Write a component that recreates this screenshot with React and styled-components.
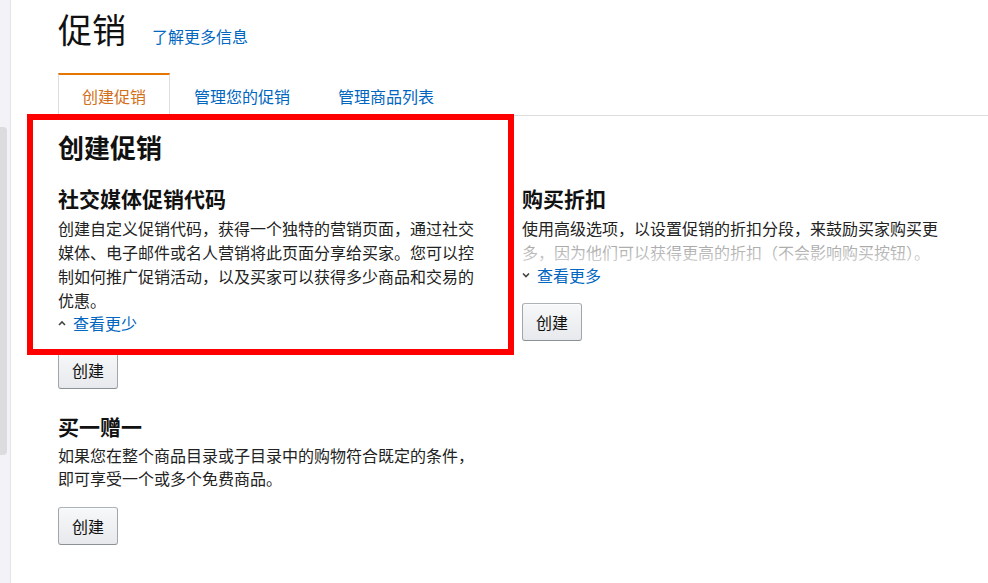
import React from 'react';
import styled, { createGlobalStyle } from 'styled-components';

const GlobalStyle = createGlobalStyle`
    html, body {
        margin: 0;
        padding: 0;
        background: #fff;
    }
    body {
        font-family: "Noto Sans CJK SC", "Noto Sans", sans-serif;
        color: #111;
    }
`;

const Pagina = styled.div`
    position: relative;
    display: flex;
    width: 988px;
    height: 583px;
    overflow: hidden;
    background: #fff;
`;

const BarraLateral = styled.div`
    width: 10px;
    flex-shrink: 0;
    background: #f3f3f7;
    border-right: 1px solid #e4e4e8;
`;

const Polegar = styled.div`
    width: 7px;
    height: 328px;
    margin-top: 127px;
    background: #dcdcdf;
    border-radius: 0 4px 4px 0;
`;

const Conteudo = styled.main`
    flex: 1;
    padding: 9px 0 0 47px;
`;

const Cabecalho = styled.div`
    display: flex;
    align-items: baseline;
    gap: 26px;
`;

const Titulo = styled.h1`
    margin: 0;
    font-size: 34px;
    line-height: 40px;
    font-weight: 400;
    color: #111;
`;

const Link = styled.a`
    font-size: 16px;
    color: #0066c0;
    text-decoration: none;
    cursor: pointer;
`;

const Abas = styled.ul`
    display: flex;
    list-style: none;
    margin: 24px 0 0;
    padding: 0;
    height: 42px;
    border-bottom: 1px solid #dddddd;
`;

const Aba = styled.li`
    box-sizing: border-box;
    height: 43px;
    margin-bottom: -1px;
    padding: 0 23px;
    display: flex;
    align-items: center;
    font-size: 16px;
    border: 1px solid ${(p) => (p.$ativa ? '#dddddd' : 'transparent')};
    border-top: 2px solid ${(p) => (p.$ativa ? '#e77600' : 'transparent')};
    border-bottom: none;
    background: #fff;
    color: ${(p) => (p.$ativa ? '#d2701c' : '#0066c0')};
    cursor: pointer;
`;

const TituloSecao = styled.h2`
    margin: 15px 0 0;
    font-size: 26px;
    line-height: 32px;
    font-weight: 700;
    color: #111;
`;

const Grade = styled.div`
    display: grid;
    grid-template-columns: 420px 420px;
    column-gap: 44px;
    align-items: start;
    margin-top: 21px;
`;

const Coluna = styled.div`
    display: flex;
    flex-direction: column;
`;

const Bloco = styled.section`
    display: flex;
    flex-direction: column;
    align-items: flex-start;
    margin-top: ${(p) => (p.$primeiro ? '0' : '23px')};
`;

const Subtitulo = styled.h3`
    margin: 0;
    font-size: 21px;
    line-height: 28px;
    font-weight: 700;
    color: #111;
`;

const Texto = styled.p`
    position: relative;
    margin: 4px 0 0;
    font-size: 16px;
    line-height: ${(p) => (p.$compacto ? '23px' : '24px')};
    color: #222;

    ${(p) =>
        p.$recolhido &&
        `
        &::after {
            content: '';
            position: absolute;
            left: 0;
            right: 0;
            bottom: 0;
            height: 24px;
            background: linear-gradient(rgba(255, 255, 255, 0.55), rgba(255, 255, 255, 0.8));
        }
    `}
`;

const Expandir = styled.a`
    display: flex;
    align-items: center;
    gap: 7px;
    font-size: 16px;
    line-height: 22px;
    color: #0066c0;
    cursor: pointer;

    svg {
        flex-shrink: 0;
    }
`;

const Botao = styled.button`
    box-sizing: border-box;
    height: 38px;
    margin-top: 17px;
    padding: 0 13px;
    font-family: inherit;
    font-size: 16px;
    color: #111;
    background: linear-gradient(#f7f8fa, #e7e9ec);
    border: 1px solid;
    border-color: #adb1b8 #a2a6ac #8d9096;
    border-radius: 3px;
    box-shadow: 0 1px 0 rgba(255, 255, 255, 0.6) inset;
    cursor: pointer;
`;

// moldura vermelha de anotação, por cima do conteúdo
const Destaque = styled.div`
    position: absolute;
    left: 27px;
    top: 114px;
    width: 487px;
    height: 241px;
    box-sizing: border-box;
    border: 6px solid #ff0000;
    pointer-events: none;
`;

function Seta({ paraCima }) {
    return (
        <svg width="8" height="6" viewBox="0 0 8 6">
            <polyline
                points={paraCima ? '1,5 4,2 7,5' : '1,1.5 4,4.5 7,1.5'}
                fill="none"
                stroke="#444"
                strokeWidth="1.6"
            />
        </svg>
    );
}

export default function App() {
    return (
        <Pagina>
            <GlobalStyle />
            <BarraLateral>
                <Polegar />
            </BarraLateral>
            <Conteudo>
                <Cabecalho>
                    <Titulo>促销</Titulo>
                    <Link>了解更多信息</Link>
                </Cabecalho>
                <Abas>
                    <Aba $ativa>创建促销</Aba>
                    <Aba>管理您的促销</Aba>
                    <Aba>管理商品列表</Aba>
                </Abas>
                <TituloSecao>创建促销</TituloSecao>
                <Grade>
                    <Coluna>
                        <Bloco $primeiro>
                            <Subtitulo>社交媒体促销代码</Subtitulo>
                            <Texto>
                                创建自定义促销代码，获得一个独特的营销页面，通过社交媒体、电子邮件或名人营销将此页面分享给买家。您可以控制如何推广促销活动，以及买家可以获得多少商品和交易的优惠。
                            </Texto>
                            <Expandir>
                                <Seta paraCima />
                                查看更少
                            </Expandir>
                            <Botao>创建</Botao>
                        </Bloco>
                        <Bloco>
                            <Subtitulo>买一赠一</Subtitulo>
                            <Texto $compacto>
                                如果您在整个商品目录或子目录中的购物符合既定的条件，即可享受一个或多个免费商品。
                            </Texto>
                            <Botao>创建</Botao>
                        </Bloco>
                    </Coluna>
                    <Coluna>
                        <Bloco $primeiro>
                            <Subtitulo>购买折扣</Subtitulo>
                            <Texto $recolhido>
                                使用高级选项，以设置促销的折扣分段，来鼓励买家购买更多，因为他们可以获得更高的折扣（不会影响购买按钮）。
                            </Texto>
                            <Expandir>
                                <Seta />
                                查看更多
                            </Expandir>
                            <Botao>创建</Botao>
                        </Bloco>
                    </Coluna>
                </Grade>
            </Conteudo>
            <Destaque />
        </Pagina>
    );
}
